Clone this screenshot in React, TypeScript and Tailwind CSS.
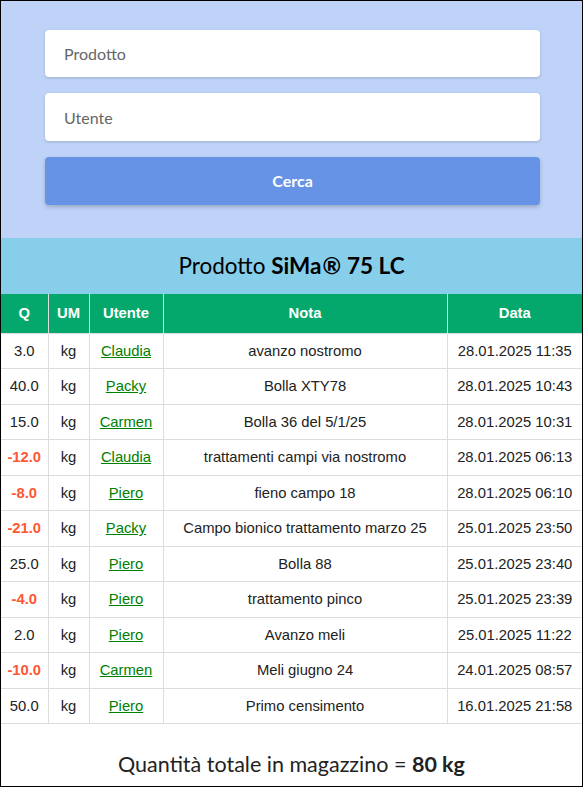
import React from "react";

type Row = { q: string; um: string; user: string; note: string; date: string };

const rows: Row[] = [
  { q: "3.0", um: "kg", user: "Claudia", note: "avanzo nostromo", date: "28.01.2025 11:35" },
  { q: "40.0", um: "kg", user: "Packy", note: "Bolla XTY78", date: "28.01.2025 10:43" },
  { q: "15.0", um: "kg", user: "Carmen", note: "Bolla 36 del 5/1/25", date: "28.01.2025 10:31" },
  { q: "-12.0", um: "kg", user: "Claudia", note: "trattamenti campi via nostromo", date: "28.01.2025 06:13" },
  { q: "-8.0", um: "kg", user: "Piero", note: "fieno campo 18", date: "28.01.2025 06:10" },
  { q: "-21.0", um: "kg", user: "Packy", note: "Campo bionico trattamento marzo 25", date: "25.01.2025 23:50" },
  { q: "25.0", um: "kg", user: "Piero", note: "Bolla 88", date: "25.01.2025 23:40" },
  { q: "-4.0", um: "kg", user: "Piero", note: "trattamento pinco", date: "25.01.2025 23:39" },
  { q: "2.0", um: "kg", user: "Piero", note: "Avanzo meli", date: "25.01.2025 11:22" },
  { q: "-10.0", um: "kg", user: "Carmen", note: "Meli giugno 24", date: "24.01.2025 08:57" },
  { q: "50.0", um: "kg", user: "Piero", note: "Primo censimento", date: "16.01.2025 21:58" },
];

const cell = "border border-[#dddddd] text-center align-middle h-[35.5px] p-0";

export default function App() {
  return (
    <div className="w-[583px] h-[787px] border border-black bg-white flex flex-col overflow-hidden">
      {/* search form */}
      <div className="bg-[#bfd2f8] pt-[29px] pb-[33px] pl-[2px] flex flex-col items-center gap-[16px]">
        <input
          placeholder="Prodotto"
          className="w-[495px] h-[47px] bg-white rounded-[4px] pl-[19px] text-[16px] text-[#333] placeholder:text-[#666] shadow-[0_1px_3px_rgba(0,0,0,0.18)] outline-none font-['Lato',sans-serif]"
        />
        <input
          placeholder="Utente"
          className="w-[495px] h-[48px] bg-white rounded-[4px] pl-[19px] text-[16px] text-[#333] placeholder:text-[#666] shadow-[0_1px_3px_rgba(0,0,0,0.18)] outline-none font-['Lato',sans-serif]"
        />
        <button className="w-[495px] h-[48px] bg-[#6693e6] rounded-[4px] text-white font-bold text-[16px] shadow-[0_2px_4px_rgba(0,0,0,0.2)] font-['Lato',sans-serif]">
          Cerca
        </button>
      </div>

      {/* product title */}
      <div className="bg-[#87ceeb] h-[56px] flex items-center justify-center text-[22.5px] text-black font-['Lato',sans-serif]">
        <span>
          Prodotto{" "}
          <b>
            SiMa<span className="ml-[1px] mr-[6px]">®</span>75 LC
          </b>
        </span>
      </div>

      {/* movements table */}
      <table className="w-full border-collapse font-['Liberation_Sans',Arial,sans-serif] text-[14.8px] text-[#222]">
        <thead>
          <tr className="bg-[#04a86c] text-white font-bold h-[39px]">
            <th className="w-[47px] border border-[#dddddd] border-t-0 border-l-0">Q</th>
            <th className="w-[41px] border border-[#dddddd] border-t-0">UM</th>
            <th className="w-[74px] border border-[#dddddd] border-t-0">Utente</th>
            <th className="w-[284px] border border-[#dddddd] border-t-0">Nota</th>
            <th className="border border-[#dddddd] border-t-0 border-r-0">Data</th>
          </tr>
        </thead>
        <tbody>
          {rows.map((r, i) => {
            const neg = r.q.startsWith("-");
            return (
              <tr key={i}>
                <td className={`${cell} border-l-0 ${neg ? "text-[#ff5733] font-bold" : ""}`}>{r.q}</td>
                <td className={cell}>{r.um}</td>
                <td className={cell}>
                  <a href="#" className="text-[#008000] underline">
                    {r.user}
                  </a>
                </td>
                <td className={cell}>{r.note}</td>
                <td className={`${cell} border-r-0`}>{r.date}</td>
              </tr>
            );
          })}
        </tbody>
      </table>

      {/* stock total */}
      <div className="flex-1 flex items-end justify-center pb-[6px] text-[21.5px] text-[#222] font-['Lato',sans-serif]">
        <span>
          Quantità totale in magazzino = <b>80 kg</b>
        </span>
      </div>
    </div>
  );
}
